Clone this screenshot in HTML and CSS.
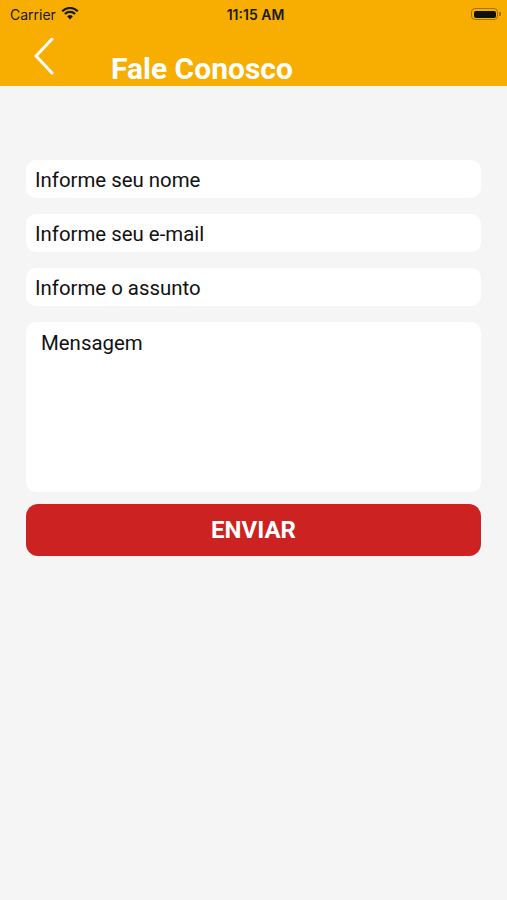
FILE: index.html
```html
<!DOCTYPE html>
<html lang="pt">
  <head>
    <meta charset="UTF-8" />
    <meta name="viewport" content="width=device-width, initial-scale=1.0" />
    <title>Fale Conosco</title>
    <link rel="stylesheet" href="styles.css">
  </head>
  <body>
    <header class="topbar">
      <div class="status">
        <div class="status-left">
          <span>Carrier</span>
          <svg class="wifi" width="18" height="13" viewBox="0 0 18 13">
            <path d="M9 12.5 L6.2 9.4 A4 4 0 0 1 11.8 9.4 Z" fill="#1a1a1a" />
            <path d="M3.9 7 A7.3 7.3 0 0 1 14.1 7" stroke="#1a1a1a" stroke-width="2.2" fill="none" />
            <path d="M1.2 4.2 A11 11 0 0 1 16.8 4.2" stroke="#1a1a1a" stroke-width="2.2" fill="none" />
          </svg>
        </div>
        <span class="time">11:15 AM</span>
        <div class="battery">
          <span class="battery-body"><span class="battery-fill"></span></span>
          <span class="battery-cap"></span>
        </div>
      </div>
      <nav class="navbar">
        <a href="javascript:;" class="back">
          <svg width="24" height="38" viewBox="0 0 24 38">
            <path d="M20 2 L4 19 L20 36" stroke="#fff" stroke-width="3" fill="none" stroke-linecap="round" stroke-linejoin="round" />
          </svg>
        </a>
        <h1 class="title">Fale Conosco</h1>
      </nav>
    </header>

    <main class="form">
      <div class="field">Informe seu nome</div>
      <div class="field">Informe seu e-mail</div>
      <div class="field">Informe o assunto</div>
      <div class="field message">Mensagem</div>
      <a href="javascript:;" class="send">ENVIAR</a>
    </main>
  </body>
</html>
```

FILE: styles.css
```css
* {
  box-sizing: border-box;
}
body {
  margin: 0;
  min-height: 900px;
  background: #f5f5f5;
  font-family: Roboto, "Liberation Sans", sans-serif;
  color: #111;
}
.topbar {
  height: 86px;
  background: #f8ae00;
}
.status {
  display: flex;
  align-items: center;
  justify-content: space-between;
  height: 28px;
  padding: 0 6px 0 10px;
  font-family: Inter, "Liberation Sans", sans-serif;
  font-size: 14px;
  color: #1a1a1a;
}
.status-left {
  display: flex;
  align-items: center;
  gap: 5px;
  width: 90px;
}
.wifi {
  margin-top: -2px;
}
.time {
  font-weight: 600;
  font-size: 14px;
}
.battery {
  display: flex;
  align-items: center;
  width: 90px;
  justify-content: flex-end;
}
.battery-body {
  display: block;
  width: 27px;
  height: 12px;
  padding: 1.5px;
  border: 1px solid rgba(60, 40, 0, 0.45);
  border-radius: 4px;
}
.battery-fill {
  display: block;
  height: 100%;
  background: #111;
  border-radius: 2px;
}
.battery-cap {
  width: 2px;
  height: 4px;
  margin-left: 1px;
  background: rgba(60, 40, 0, 0.45);
  border-radius: 0 1px 1px 0;
}
.navbar {
  display: flex;
  align-items: flex-start;
  height: 58px;
}
.back {
  display: block;
  margin: 9px 0 0 32px;
  width: 24px;
  height: 38px;
}
.title {
  margin: 25px 0 0 55px;
  font-size: 30px;
  font-weight: 700;
  line-height: 32px;
  color: #fff;
}
.form {
  display: flex;
  flex-direction: column;
  gap: 16px;
  padding: 74px 26px 0;
}
.field {
  height: 38px;
  padding: 1px 9px 0;
  background: #fff;
  border-radius: 10px;
  font-size: 20.4px;
  line-height: 38px;
}
.message {
  height: 170px;
  padding: 8px 15px;
  line-height: 26px;
}
.send {
  display: block;
  height: 52px;
  margin-top: -4px;
  background: #cd2222;
  border-radius: 12px;
  text-align: center;
  text-decoration: none;
  font-size: 24px;
  font-weight: 700;
  line-height: 52px;
  color: #fff;
}
```
